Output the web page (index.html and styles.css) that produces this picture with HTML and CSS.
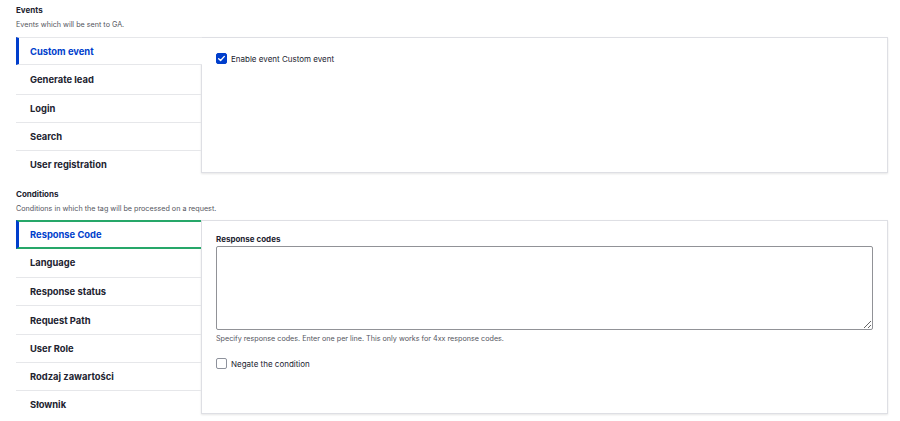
FILE: index.html
```html
<!DOCTYPE html>
<html lang="en">
<head>
<meta charset="utf-8">
<title>GA tag settings</title>
<link rel="stylesheet" href="styles.css">
</head>
<body>
<section class="group group-events">
  <h3 class="group-title">Events</h3>
  <p class="group-desc">Events which will be sent to GA.</p>
  <div class="vtabs">
    <ul class="vtabs-menu">
      <li class="vtab is-active">Custom event</li>
      <li class="vtab">Generate lead</li>
      <li class="vtab">Login</li>
      <li class="vtab">Search</li>
      <li class="vtab">User registration</li>
    </ul>
    <div class="vtabs-pane">
      <label class="check">
        <span class="box is-checked">
          <svg viewBox="0 0 12 12" width="9" height="9"><path d="M2.2 6.3 L4.8 8.7 L9.8 3.2" fill="none" stroke="#fff" stroke-width="1.8" stroke-linecap="round" stroke-linejoin="round"/></svg>
        </span>
        <span class="check-label">Enable event Custom event</span>
      </label>
    </div>
  </div>
</section>

<section class="group group-conditions">
  <h3 class="group-title">Conditions</h3>
  <p class="group-desc">Conditions in which the tag will be processed on a request.</p>
  <div class="vtabs">
    <ul class="vtabs-menu">
      <li class="vtab is-active is-focus">Response Code</li>
      <li class="vtab">Language</li>
      <li class="vtab">Response status</li>
      <li class="vtab">Request Path</li>
      <li class="vtab">User Role</li>
      <li class="vtab">Rodzaj zawartości</li>
      <li class="vtab">Słownik</li>
    </ul>
    <div class="vtabs-pane">
      <div class="field-label">Response codes</div>
      <textarea class="codes"></textarea>
      <p class="field-desc">Specify response codes. Enter one per line. This only works for 4xx response codes.</p>
      <label class="check check-negate">
        <span class="box"></span>
        <span class="check-label">Negate the condition</span>
      </label>
    </div>
  </div>
</section>
</body>
</html>
```

FILE: styles.css
```css
* { box-sizing: border-box; }

html, body {
  margin: 0;
  padding: 0;
  background: #ffffff;
}

body {
  font-family: Inter, "Noto Sans", "Liberation Sans", sans-serif;
  color: #222330;
  padding: 5px 12px 0 16px;
}

.group-title {
  margin: 0;
  font-size: 8px;
  line-height: 11px;
  font-weight: 700;
}

.group-desc {
  margin: 4px 0 0;
  font-size: 7.2px;
  line-height: 10px;
  color: #545560;
}

.group-events .vtabs { margin-top: 7px; }
.group-conditions { margin-top: 11px; }
.group-conditions .vtabs { margin-top: 6px; }

.vtabs {
  display: grid;
  grid-template-columns: 185px 1fr;
  align-items: stretch;
}

.vtabs-menu {
  list-style: none;
  margin: 0;
  padding: 0;
  position: relative;
  z-index: 1;
}

.vtab {
  height: 28.3px;
  display: flex;
  align-items: center;
  padding-left: 14px;
  font-size: 9.4px;
  font-weight: 700;
  color: #222330;
  border-top: 1px solid #e6e7ea;
}

.vtab.is-active {
  color: #003ecc;
  background: #ffffff;
  border-left: 3px solid #003ecc;
  border-bottom: 1px solid #e6e7ea;
  padding-left: 11px;
  margin-right: -1px;
}

.vtab.is-active + .vtab { border-top: 0; }

.vtab.is-focus {
  border-top: 2px solid #26a769;
  border-bottom: 2px solid #26a769;
  margin-right: 0;
}

.vtabs-pane {
  background: #ffffff;
  border: 1px solid #dedfe4;
  box-shadow: 0 1px 2px rgba(0, 0, 0, 0.10);
  margin-bottom: 5px;
  padding: 14px;
}

.check {
  display: flex;
  align-items: center;
  gap: 4px;
  font-size: 8px;
  color: #222330;
}

.box {
  width: 11px;
  height: 11px;
  border: 1px solid #8e929c;
  border-radius: 2px;
  background: #ffffff;
  display: inline-flex;
  align-items: center;
  justify-content: center;
  flex: none;
}

.box.is-checked {
  background: #003ecc;
  border-color: #003ecc;
}

.group-events .check { margin-top: 1px; }

.field-label {
  font-size: 8px;
  font-weight: 700;
  line-height: 11px;
  margin-top: -1px;
}

.codes {
  display: block;
  width: 100%;
  height: 84px;
  margin: 1px 0 0;
  border: 1px solid #919297;
  border-radius: 2px;
  background: #ffffff;
  resize: vertical;
  font: inherit;
}

.field-desc {
  margin: 4px 0 0;
  font-size: 7.2px;
  line-height: 10px;
  color: #545560;
}

.check-negate { margin-top: 14px; }
```
